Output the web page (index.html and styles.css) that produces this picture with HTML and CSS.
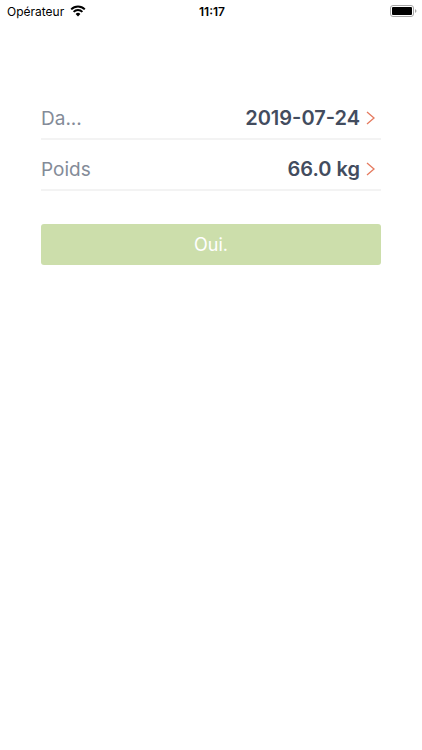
FILE: index.html
```html
<!DOCTYPE html>
<html lang="fr">
<head>
    <meta charset="UTF-8">
    <meta name="viewport" content="width=device-width, initial-scale=1.0">
    <title>Poids</title>
    <link rel="stylesheet" href="styles.css">
</head>
<body>
    <header class="status-bar">
        <div class="carrier">
            <span>Opérateur</span>
            <svg class="wifi" viewBox="0 0 16 12" aria-hidden="true">
                <path d="M1.2 4.4a9.6 9.6 0 0 1 13.6 0" />
                <path d="M3.6 6.9a6.2 6.2 0 0 1 8.8 0" />
                <path class="wifi-dot" d="M8 11.4 5.6 9a3.4 3.4 0 0 1 4.8 0z" />
            </svg>
        </div>
        <div class="time">11:17</div>
        <div class="power">
            <svg class="battery" viewBox="0 0 27 12" aria-hidden="true">
                <rect class="battery-case" x="0.5" y="0.5" width="23" height="11" rx="2.5" />
                <rect x="2" y="2" width="20" height="8" rx="1" />
                <path class="battery-tip" d="M25 4v4c2-1 2-3 0-4z" />
            </svg>
        </div>
    </header>
    <main>
        <form class="entry">
            <div class="row">
                <label for="date">Da...</label>
                <button type="button" id="date" class="value">
                    2019-07-24
                    <svg class="chevron" viewBox="0 0 9 14" aria-hidden="true"><path d="M1 1l7 6-7 6" /></svg>
                </button>
            </div>
            <div class="row">
                <label for="weight">Poids</label>
                <button type="button" id="weight" class="value">
                    66.0 kg
                    <svg class="chevron" viewBox="0 0 9 14" aria-hidden="true"><path d="M1 1l7 6-7 6" /></svg>
                </button>
            </div>
            <button type="submit" class="confirm">Oui.</button>
        </form>
    </main>
</body>
</html>
```
FILE: styles.css
```css
body {
    margin: 0;
    font-family: Inter, "Liberation Sans", sans-serif;
    background-color: #fff;
}

button {
    border: none;
    padding: 0;
    font-family: inherit;
    cursor: pointer;
}

.status-bar {
    display: grid;
    grid-template-columns: 1fr auto 1fr;
    align-items: center;
    height: 22px;
    padding: 0 5px 0 7px;
    font-size: 12px;
    color: #000;
}

.carrier {
    display: flex;
    align-items: center;
    gap: 6px;
}

.wifi {
    width: 16px;
    height: 12px;
    fill: none;
    stroke: #000;
    stroke-width: 2;
}

.wifi .wifi-dot {
    fill: #000;
    stroke: none;
}

.time {
    font-weight: 600;
}

.power {
    display: flex;
    justify-content: flex-end;
}

.battery {
    width: 27px;
    height: 12px;
}

.battery-case {
    fill: none;
    stroke: #a6a6a6;
}

.battery-tip {
    fill: #a6a6a6;
}

.entry {
    margin: 67px 41px 0;
}

.row {
    display: flex;
    justify-content: space-between;
    align-items: baseline;
    padding: 17px 6px 7px 0;
    border-bottom: 2px solid #f3f3f3;
    line-height: 24px;
}

.row label {
    font-size: 19px;
    color: #848b98;
}

.value {
    display: flex;
    align-items: center;
    gap: 6px;
    background: none;
    font-size: 20px;
    font-weight: 600;
    line-height: 24px;
    color: #434c5e;
}

.chevron {
    width: 9px;
    height: 14px;
    fill: none;
    stroke: #e57a5f;
    stroke-width: 1.3;
}

.confirm {
    display: block;
    width: 100%;
    height: 41px;
    margin-top: 33px;
    border-radius: 3px;
    background-color: #ccdeab;
    color: #fff;
    font-size: 18px;
}
```
